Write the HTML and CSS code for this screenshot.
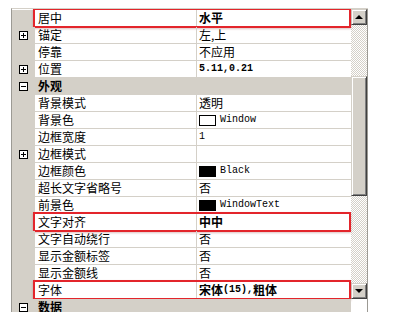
FILE: index.html
```html
<!DOCTYPE html>
<html lang="zh-CN">
    <head>
        <meta charset="UTF-8" />
        <title>属性</title>
        <link rel="stylesheet" href="styles.css">
    </head>
    <body>
        <div class="panel">
            <div class="grid">
                <div class="row hl">
                    <div class="gutter"></div>
                    <div class="name">居中</div>
                    <div class="value bold">水平</div>
                </div>
                <div class="row">
                    <div class="gutter"><span class="box plus"></span></div>
                    <div class="name">锚定</div>
                    <div class="value">左,上</div>
                </div>
                <div class="row">
                    <div class="gutter"></div>
                    <div class="name">停靠</div>
                    <div class="value">不应用</div>
                </div>
                <div class="row">
                    <div class="gutter"><span class="box plus"></span></div>
                    <div class="name">位置</div>
                    <div class="value bold"><span class="lat">5.11,0.21</span></div>
                </div>
                <div class="row cat">
                    <div class="gutter"><span class="box"></span></div>
                    <div class="name">外观</div>
                </div>
                <div class="row">
                    <div class="gutter"></div>
                    <div class="name">背景模式</div>
                    <div class="value">透明</div>
                </div>
                <div class="row">
                    <div class="gutter"></div>
                    <div class="name">背景色</div>
                    <div class="value"><span class="swatch"></span><span class="lat">Window</span></div>
                </div>
                <div class="row">
                    <div class="gutter"></div>
                    <div class="name">边框宽度</div>
                    <div class="value"><span class="lat">1</span></div>
                </div>
                <div class="row">
                    <div class="gutter"><span class="box plus"></span></div>
                    <div class="name">边框模式</div>
                    <div class="value"></div>
                </div>
                <div class="row">
                    <div class="gutter"></div>
                    <div class="name">边框颜色</div>
                    <div class="value"><span class="swatch dark"></span><span class="lat">Black</span></div>
                </div>
                <div class="row">
                    <div class="gutter"></div>
                    <div class="name">超长文字省略号</div>
                    <div class="value">否</div>
                </div>
                <div class="row">
                    <div class="gutter"></div>
                    <div class="name">前景色</div>
                    <div class="value"><span class="swatch dark"></span><span class="lat">WindowText</span></div>
                </div>
                <div class="row hl">
                    <div class="gutter"></div>
                    <div class="name">文字对齐</div>
                    <div class="value bold">中中</div>
                </div>
                <div class="row">
                    <div class="gutter"></div>
                    <div class="name">文字自动绕行</div>
                    <div class="value">否</div>
                </div>
                <div class="row">
                    <div class="gutter"></div>
                    <div class="name">显示金额标签</div>
                    <div class="value">否</div>
                </div>
                <div class="row">
                    <div class="gutter"></div>
                    <div class="name">显示金额线</div>
                    <div class="value">否</div>
                </div>
                <div class="row hl">
                    <div class="gutter"></div>
                    <div class="name">字体</div>
                    <div class="value bold">宋体<span class="lat">(15),</span>粗体</div>
                </div>
                <div class="row cat">
                    <div class="gutter"><span class="box"></span></div>
                    <div class="name">数据</div>
                </div>
            </div>

            <div class="scrollbar">
                <div class="btn up"><span class="arrow"></span></div>
                <div class="track">
                    <div class="gap top"></div>
                    <div class="thumb"></div>
                    <div class="gap"></div>
                </div>
                <div class="btn down"><span class="arrow"></span></div>
            </div>
        </div>
    </body>
</html>
```

FILE: styles.css
```css
body {
    margin: 0;
    background: #fff;
    font-family: "Noto Sans CJK SC", "Liberation Sans", sans-serif;
    font-size: 12px;
    color: #000;
}
.panel {
    display: flex;
    width: 356px;
    height: 303px;
    margin: 8px 0 0 11px;
    border-left: 1px solid #9c9a94;
    border-top: 1px solid #d4d0c8;
    overflow: hidden;
}
.grid {
    width: 340px;
    padding-top: 1px;
}
.row {
    position: relative;
    display: flex;
    height: 17px;
}
.gutter {
    width: 23px;
    flex: none;
    background: #d4d0c8;
    display: flex;
    align-items: center;
    justify-content: center;
    padding-right: 1px;
    box-sizing: border-box;
}
.name,
.value {
    height: 16px;
    line-height: 16px;
    border-bottom: 1px solid #d4d0c8;
    white-space: nowrap;
    overflow: hidden;
}
.name {
    width: 158px;
    padding-left: 3px;
    border-right: 1px solid #d4d0c8;
}
.value {
    flex: 1;
    padding-left: 2px;
    display: flex;
    align-items: center;
}
.bold {
    font-weight: bold;
}
.lat {
    font-family: "Liberation Mono", monospace;
    font-size: 10px;
}
.cat .name {
    flex: 1;
    font-weight: bold;
    background: #d4d0c8;
    border-right: none;
    border-bottom-color: #d4d0c8;
}
.box {
    position: relative;
    width: 7px;
    height: 7px;
    border: 1px solid #000;
    background: #fff;
}
.box::before {
    content: "";
    position: absolute;
    left: 1px;
    top: 3px;
    width: 5px;
    height: 1px;
    background: #000;
}
.plus::after {
    content: "";
    position: absolute;
    left: 3px;
    top: 1px;
    width: 1px;
    height: 5px;
    background: #000;
}
.swatch {
    width: 15px;
    height: 9px;
    border: 1px solid #000;
    background: #fff;
    margin-right: 4px;
}
.swatch.dark {
    background: #000;
}
.hl::after {
    content: "";
    position: absolute;
    left: 21px;
    right: 0;
    top: -2px;
    bottom: -1px;
    border: 2px solid #e3252b;
    box-shadow: 0 1px 2px rgba(120, 0, 0, 0.25);
    pointer-events: none;
}
.scrollbar {
    width: 16px;
    display: flex;
    flex-direction: column;
    border-right: 1px solid #9c9a94;
}
.btn {
    height: 16px;
    flex: none;
    background: #d4d0c8;
    box-sizing: border-box;
    border: 1px solid;
    border-color: #d4d0c8 #404040 #404040 #d4d0c8;
    box-shadow: inset 1px 1px #fff, inset -1px -1px #808080;
    display: flex;
    align-items: center;
    justify-content: center;
}
.arrow {
    width: 0;
    height: 0;
    border-left: 4px solid transparent;
    border-right: 4px solid transparent;
}
.up .arrow {
    border-bottom: 4px solid #000;
}
.down .arrow {
    border-top: 4px solid #000;
}
.track {
    height: 258px;
    display: flex;
    flex-direction: column;
}
.gap {
    flex: 1;
    background: repeating-conic-gradient(#fff 0 25%, #d4d0c8 0 50%) 0 0 / 2px 2px;
}
.gap.top {
    flex: none;
    height: 51px;
}
.thumb {
    height: 120px;
    background: #d4d0c8;
    box-sizing: border-box;
    border: 1px solid;
    border-color: #d4d0c8 #404040 #404040 #d4d0c8;
    box-shadow: inset 1px 1px #fff, inset -1px -1px #808080;
}
```
